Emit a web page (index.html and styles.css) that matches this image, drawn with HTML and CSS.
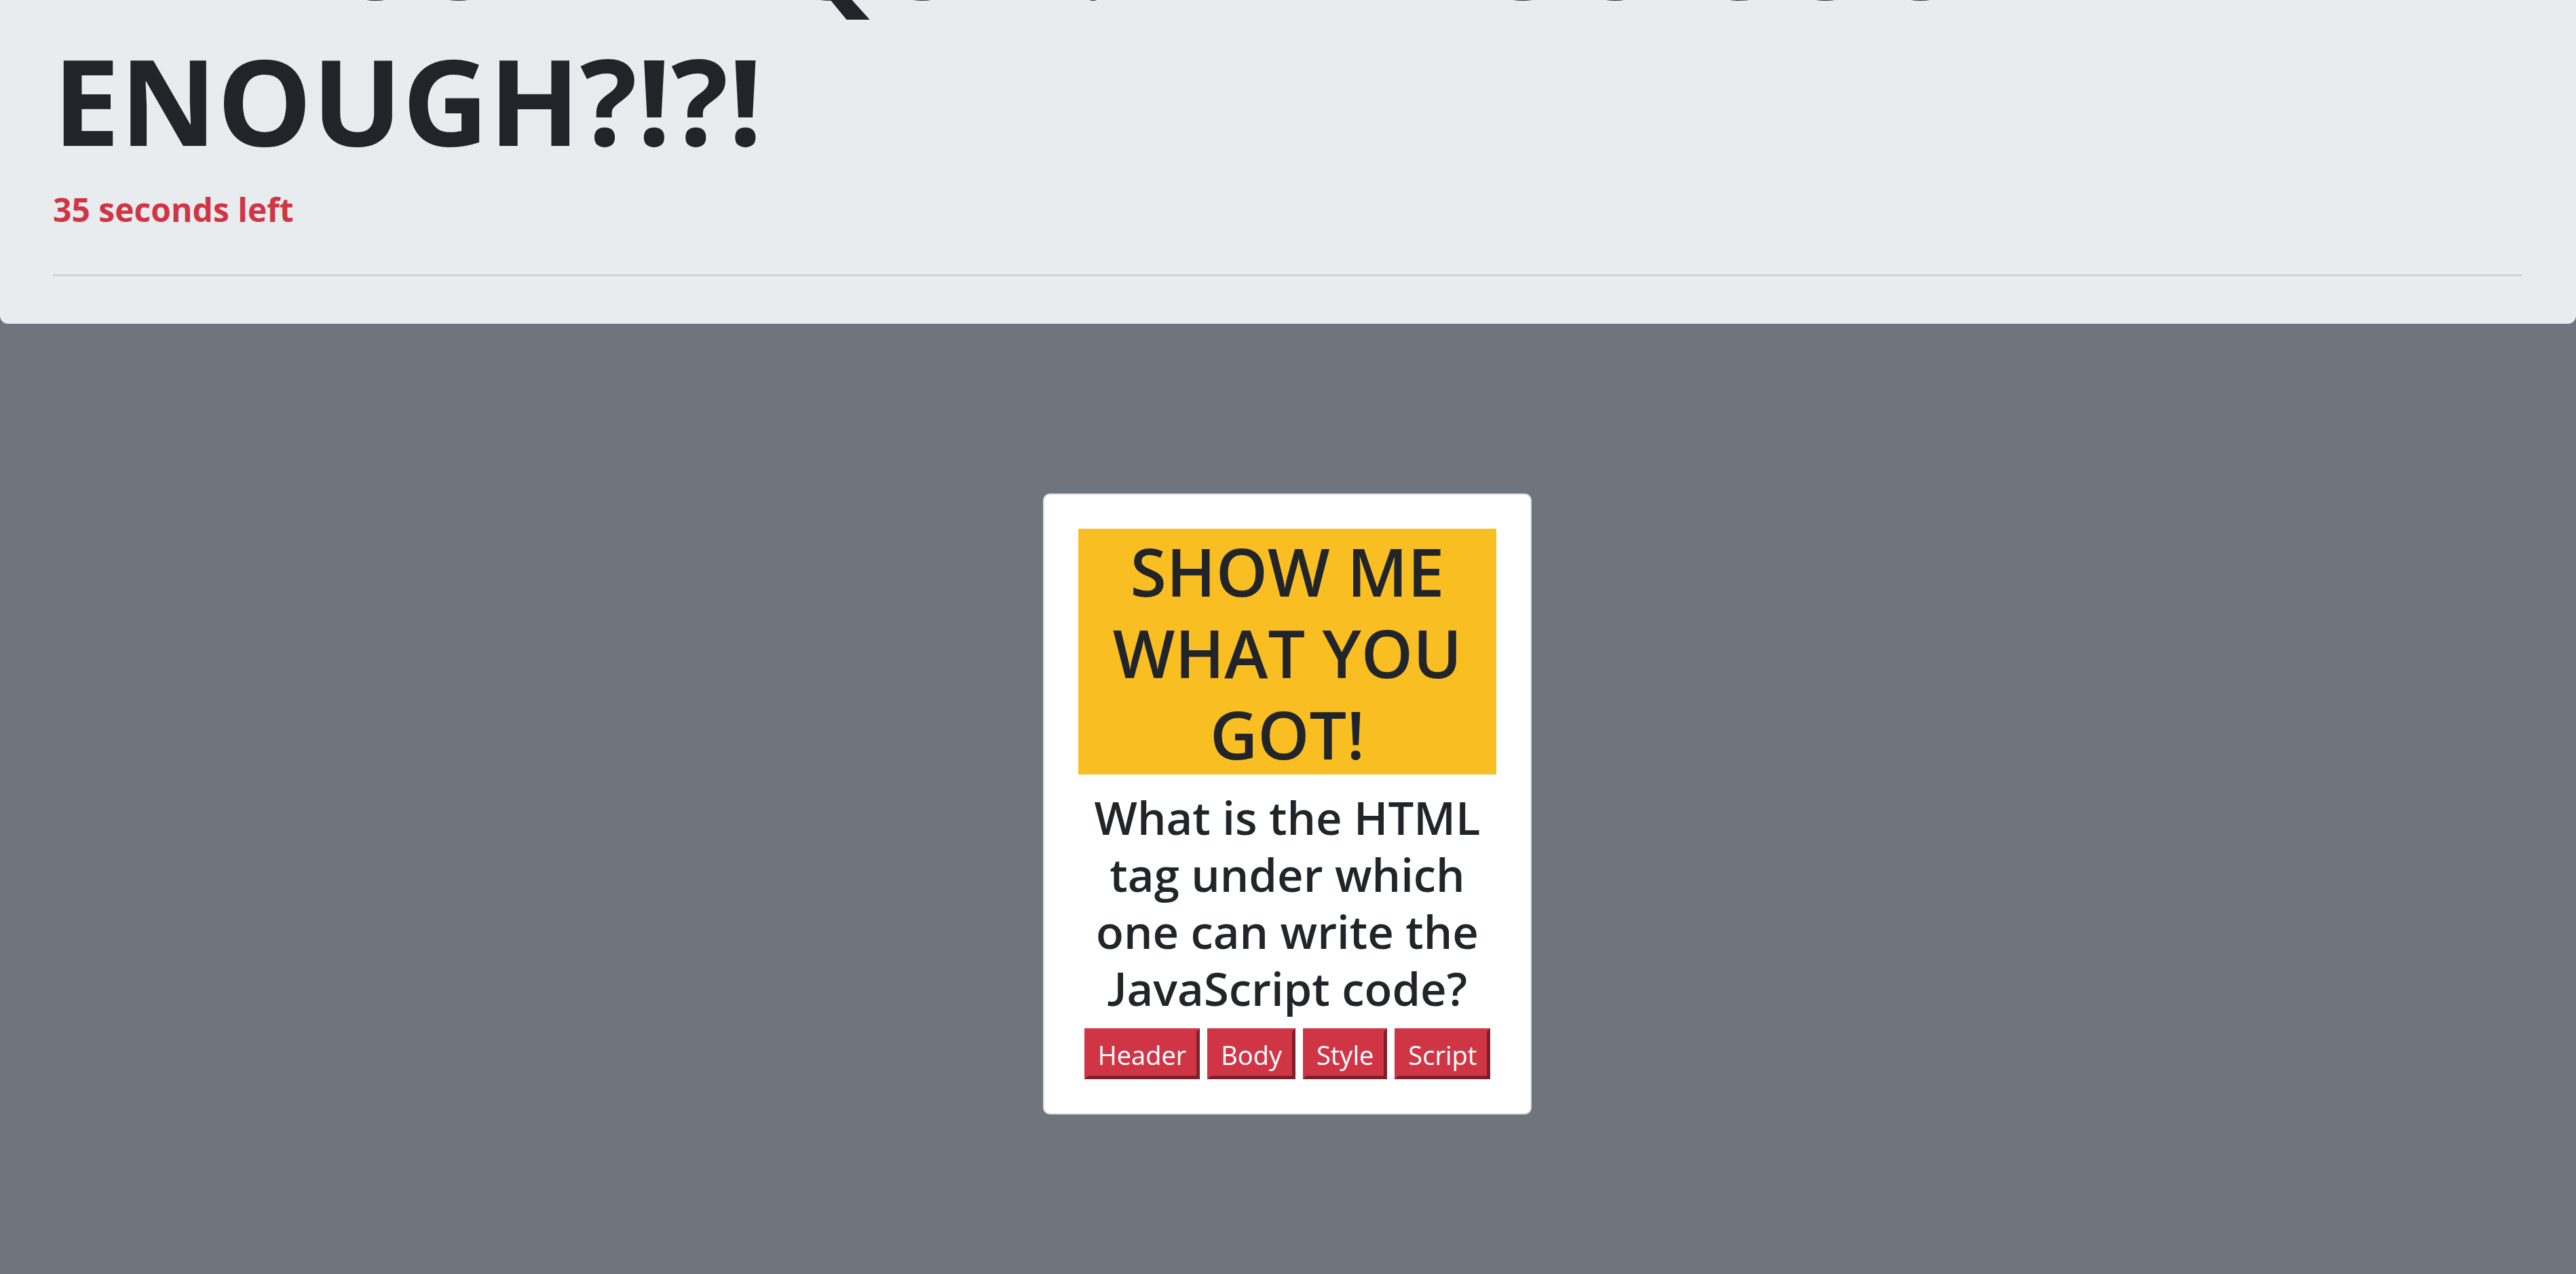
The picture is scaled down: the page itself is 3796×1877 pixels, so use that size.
FILE: index.html
```html
<!DOCTYPE html>
<html lang="en">
<head>
<meta charset="utf-8">
<title>JavaScript Quiz</title>
<link rel="stylesheet" href="styles.css">
</head>
<body>
<header class="jumbotron">
  <h1 class="title"><span class="cap-j">J</span>AVASCRIPT QUIZ! ARE YOU GOOD ENOUGH?!?!</h1>
  <p class="timer">35 seconds left</p>
  <hr class="divider">
</header>
<main class="quiz">
  <section class="card">
    <h2 class="card-title">SHOW ME WHAT YOU GOT!</h2>
    <h3 class="question">What is the HTML tag under which one can write the <span class="cap-j">J</span>avaScript code?</h3>
    <div class="choices">
      <button class="choice" type="button">Header</button>
      <button class="choice" type="button">Body</button>
      <button class="choice" type="button">Style</button>
      <button class="choice" type="button">Script</button>
    </div>
  </section>
</main>
</body>
</html>
```
FILE: styles.css
```css
* {
  box-sizing: border-box;
}

html {
  overflow: hidden;
}

body {
  margin: 0;
  background: #6e757c;
  color: #212529;
  font-family: "Segoe UI", "Open Sans", "Noto Sans", sans-serif;
  font-size: 38px;
  line-height: 60px;
}

h1, h2, h3, p {
  margin: 0;
}

/* A capital J that stays on the baseline */
.cap-j {
  font-family: "Segoe UI", Lato, sans-serif;
  line-height: 1;
}

/* The first title line is scrolled past the top edge */
.jumbotron {
  margin-top: -177px;
  padding: 0 80px 70px 78px;
  background: #e8ecef;
  border-radius: 0 0 12px 12px;
}

.title {
  font-size: 176px;
  font-weight: 700;
  line-height: 216px;
}

.timer {
  margin-top: 24px;
  color: #d03545;
  font-size: 48px;
  font-weight: 700;
}

.divider {
  height: 3px;
  margin: 65px 0 0;
  border: 0;
  background: #d0d4d7;
}

.quiz {
  display: flex;
  justify-content: center;
  padding: 250px 2px 0 0;
}

.card {
  width: 720px;
  padding: 50px;
  border: 2px solid #dfdfdf;
  border-radius: 10px;
  background: #fff;
  text-align: center;
}

.card-title {
  padding-top: 2px;
  background: #f9be22;
  font-size: 97px;
  font-weight: 600;
  line-height: 120px;
}

.question {
  margin-top: 21px;
  font-size: 67px;
  font-weight: 600;
  line-height: 84px;
}

.choices {
  display: flex;
  justify-content: center;
  gap: 11px;
  margin-top: 17px;
}

.choice {
  padding: 4px 15px 1px;
  border: 5px solid;
  border-color: #d03545 #7e202a #7e202a #d03545;
  background: #d03545;
  color: #fff;
  font: inherit;
}
```
